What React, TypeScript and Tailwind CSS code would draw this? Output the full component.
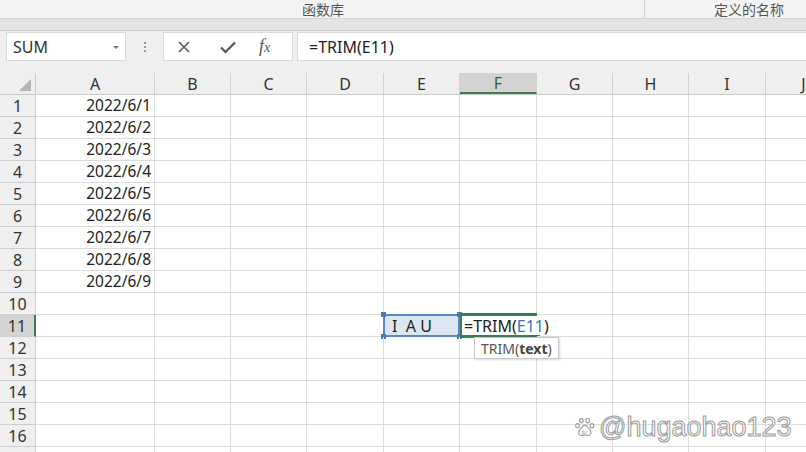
import React from "react";

const COLS = ["A", "B", "C", "D", "E", "F", "G", "H", "I", "J"];
const WIDTHS = ["w-[119px]", "w-[76px]", "w-[76px]", "w-[77px]", "w-[76px]", "w-[77px]", "w-[76px]", "w-[76px]", "w-[77px]", "w-[76px]"];
const ROWS = Array.from({ length: 17 }, (_, i) => i + 1);

function Handle({ pos, color }: { pos: string; color: string }) {
  return <span className={`absolute size-[5px] ${pos} ${color}`} />;
}

function BaiduPaw() {
  return (
    <svg viewBox="0 0 24 24" className="size-[22px]" fill="none" stroke="#9a9a9a" strokeWidth="1.2" aria-hidden>
      <ellipse cx="8" cy="5" rx="2" ry="2.6" />
      <ellipse cx="15" cy="5" rx="2" ry="2.6" />
      <ellipse cx="3.8" cy="10.5" rx="2" ry="2.4" />
      <ellipse cx="19.6" cy="10.5" rx="2" ry="2.4" />
      <path d="M11.7 10c-2 0-3 2.2-4.6 3.8C5.4 15.5 4.5 17 5 19c.6 2 2.6 2.4 4.2 2.1 1.2-.2 1.8-.5 2.5-.5s1.4.3 2.6.5c1.6.3 3.6-.1 4.2-2.1.5-2-.4-3.5-2.1-5.2C14.7 12.2 13.7 10 11.7 10z" />
      <text x="8.2" y="19.3" fontSize="5" fill="#9a9a9a" stroke="none" fontFamily="Liberation Sans, sans-serif">du</text>
    </svg>
  );
}

function Cell({ row, col }: { row: number; col: number }) {
  const name = COLS[col];
  const base = `relative h-[22px] shrink-0 border-r border-b border-[#dcdcdc] ${WIDTHS[col]}`;
  if (name === "A" && row <= 9) {
    return (
      <div className={`${base} flex items-center justify-end pr-[3px] text-[15.5px] text-[#222]`}>2022/6/{row}</div>
    );
  }
  if (name === "E" && row === 11) {
    return (
      <div className={`${base} bg-[#dde7f4]`}>
        <span className="absolute inset-[-1px] border-2 border-[#5a86c4]" />
        <Handle pos="left-[-3px] top-[-3px]" color="bg-[#4c78b4]" />
        <Handle pos="right-[-3px] top-[-3px]" color="bg-[#4c78b4]" />
        <Handle pos="left-[-3px] bottom-[-3px]" color="bg-[#4c78b4]" />
        <Handle pos="right-[-3px] bottom-[-3px]" color="bg-[#4c78b4]" />
        <span className="relative flex h-full items-center whitespace-pre pl-[8px] text-[#222]">{"I  A U"}</span>
      </div>
    );
  }
  if (name === "F" && row === 11) {
    return (
      <div className={`${base} border-r-0`}>
        <span className="absolute left-0 right-0 top-[-2px] h-[3px] bg-[#3d7a55]" />
        <span className="absolute left-0 right-0 bottom-[-2px] h-[3px] bg-[#3d7a55]" />
        <span className="absolute left-0 top-0 bottom-0 w-[2px] bg-[#3d7a55]" />
        <Handle pos="right-[-3px] bottom-[-4px]" color="bg-[#3d7a55]" />
        <span className="relative z-10 flex h-full items-center whitespace-nowrap pl-[4px] text-[#222]">
          =TRIM(<span className="text-[#3f72b8]">E11</span>)
        </span>
        <div className="absolute left-[14px] top-[22px] z-20 flex h-[22px] items-center border border-[#c6c6c6] bg-white px-[6px] text-[14px] whitespace-nowrap text-[#555] shadow-[1px_1px_2px_rgba(0,0,0,0.15)]">
          TRIM(<b className="font-bold text-[#444]">text</b>)
        </div>
      </div>
    );
  }
  return <div className={base} />;
}

export default function App() {
  return (
    <div className="relative h-[452px] w-[806px] overflow-hidden bg-white font-['Noto_Sans','Noto_Sans_CJK_SC',sans-serif] text-[16px]">
      {/* ribbon group labels */}
      <div className="flex h-[19px] border-b border-[#d6d6d6] bg-[#f3f3f3] text-[14px] text-[#555]">
        <div className="flex w-[645px] items-center justify-center border-r border-[#d2d2d2] pl-[2px]">函数库</div>
        <div className="flex flex-1 items-center justify-end pr-[22px]">定义的名称</div>
      </div>
      <div className="h-[12px] border-b border-[#d0d0d0] bg-[#e4e4e4]" />

      {/* formula bar */}
      <div className="flex h-[42px] items-start bg-[#efefef] pt-[1px]">
        <div className="ml-[6px] flex h-[29px] w-[120px] items-center justify-between border border-[#dadada] bg-white pl-[6px] pr-[6px] text-[#333]">
          <span>SUM</span>
          <span className="mt-[1px] border-x-[3px] border-t-[3px] border-x-transparent border-t-[#777]" />
        </div>
        <div className="flex h-[29px] w-[37px] flex-col items-center justify-center gap-[2px]">
          <span className="size-[2px] bg-[#9a9a9a]" />
          <span className="size-[2px] bg-[#9a9a9a]" />
          <span className="size-[2px] bg-[#9a9a9a]" />
        </div>
        <div className="flex h-[29px] w-[130px] items-center border border-[#dadada] bg-white text-[#555]">
          <svg viewBox="0 0 16 16" className="ml-[12px] size-[16px]" fill="none" stroke="#555" strokeWidth="1.6" aria-hidden>
            <path d="M3 3l10 10M13 3L3 13" />
          </svg>
          <svg viewBox="0 0 18 16" className="ml-[27px] size-[18px]" fill="none" stroke="#555" strokeWidth="2.2" aria-hidden>
            <path d="M2 8.5l4.5 4.5L16 3.5" />
          </svg>
          <span className="ml-[22px] font-['Liberation_Serif',serif] text-[18px] italic text-[#555]">
            f<span className="text-[14px]">x</span>
          </span>
        </div>
        <div className="ml-[4px] flex h-[29px] flex-1 items-center border border-[#dadada] border-r-0 bg-white pl-[11px] text-[#222]">
          =TRIM(E11)
        </div>
      </div>

      {/* column headers */}
      <div className="flex h-[22px] border-b border-[#c9c9c9] bg-[#efefef] text-[#333]">
        <div className="relative w-[36px] shrink-0 border-r border-[#c9c9c9]">
          <span className="absolute bottom-[3px] right-[4px] border-b-[12px] border-l-[12px] border-b-[#b5b5b5] border-l-transparent" />
        </div>
        {COLS.map((c, i) => (
          <div
            key={c}
            className={`flex shrink-0 items-center justify-center border-r border-[#d0d0d0] ${WIDTHS[i]} ${
              c === "F" ? "border-b-2 border-b-[#3d7a55] bg-[#d3d3d3] text-[#2f5f43]" : ""
            }`}
          >
            {c}
          </div>
        ))}
      </div>

      {/* rows */}
      {ROWS.map((r) => (
        <div key={r} className="flex">
          <div
            className={`flex h-[22px] w-[36px] shrink-0 items-center justify-center border-b border-r border-[#cfcfcf] text-[#333] ${
              r === 11 ? "border-r-2 border-r-[#3d7a55] bg-[#d3d3d3] text-[#2f5f43]" : "bg-[#efefef]"
            }`}
          >
            {r}
          </div>
          {COLS.map((_, i) => (
            <Cell key={i} row={r} col={i} />
          ))}
        </div>
      ))}

      {/* watermark */}
      <div className="pointer-events-none absolute left-[574px] top-[407px] flex items-center gap-[3px]">
        <BaiduPaw />
        <span className="font-['Liberation_Sans',sans-serif] text-[27px] tracking-[0px] text-transparent [-webkit-text-stroke:1px_#9a9a9a] [text-shadow:2px_1px_0_rgba(255,255,255,0.6)]">
          @hugaohao123
        </span>
      </div>
    </div>
  );
}
